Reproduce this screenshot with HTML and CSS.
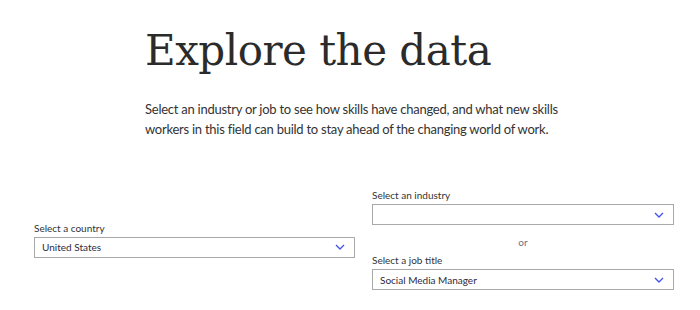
FILE: index.html
```html
<!DOCTYPE html>
<html lang="en">
<head>
<meta charset="utf-8">
<title>Explore the data</title>
<link rel="stylesheet" href="styles.css">
</head>
<body>
<main class="page">
  <section class="hero">
    <h1 class="title">Explore the data</h1>
    <p class="intro">Select an industry or job to see how skills have changed, and what new skills<br>workers in this field can build to stay ahead of the changing world of work.</p>
  </section>
  <section class="selectors">
    <div class="col col-left">
      <label class="field-label">Select a country</label>
      <div class="select">
        <span class="select-value">United States</span>
        <svg class="chev" viewBox="0 0 10 6" width="10" height="6"><path d="M1 1 L5 5 L9 1" fill="none" stroke="#4457e6" stroke-width="1.4"/></svg>
      </div>
    </div>
    <div class="col col-right">
      <label class="field-label">Select an industry</label>
      <div class="select">
        <span class="select-value"></span>
        <svg class="chev" viewBox="0 0 10 6" width="10" height="6"><path d="M1 1 L5 5 L9 1" fill="none" stroke="#4457e6" stroke-width="1.4"/></svg>
      </div>
      <div class="or">or</div>
      <label class="field-label">Select a job title</label>
      <div class="select">
        <span class="select-value">Social Media Manager</span>
        <svg class="chev" viewBox="0 0 10 6" width="10" height="6"><path d="M1 1 L5 5 L9 1" fill="none" stroke="#4457e6" stroke-width="1.4"/></svg>
      </div>
    </div>
  </section>
</main>
</body>
</html>
```
FILE: styles.css
```css
html, body {
  margin: 0;
  padding: 0;
  background: #ffffff;
}
body {
  width: 700px;
  height: 310px;
  overflow: hidden;
  font-family: Lato, "Open Sans", sans-serif;
  color: #333333;
}
.hero {
  padding: 23px 0 0 145px;
}
.title {
  margin: 0;
  font-family: "DejaVu Serif", serif;
  font-weight: normal;
  font-size: 42px;
  letter-spacing: -0.5px;
  line-height: 56px;
  color: #2b2b2b;
}
.intro {
  margin: 20px 0 0;
  font-size: 13px;
  letter-spacing: -0.25px;
  line-height: 20px;
  color: #333333;
}
.selectors {
  display: flex;
  align-items: center;
  gap: 17px;
  padding: 49px 0 0 34px;
}
.col {
  display: flex;
  flex-direction: column;
}
.col-left {
  width: 321px;
}
.col-right {
  width: 302px;
}
.field-label {
  font-size: 10px;
  line-height: 14px;
  color: #333333;
  margin-bottom: 2px;
}
.select {
  box-sizing: border-box;
  height: 21px;
  border: 1px solid #a9a9a9;
  display: flex;
  align-items: center;
  justify-content: space-between;
  padding: 0 9px 0 7px;
}
.select-value {
  font-size: 10px;
  color: #2e2a3a;
}
.chev {
  display: block;
}
.or {
  text-align: center;
  font-size: 10px;
  line-height: 14px;
  color: #6a7088;
  margin: 10px 0 4px;
}
```
